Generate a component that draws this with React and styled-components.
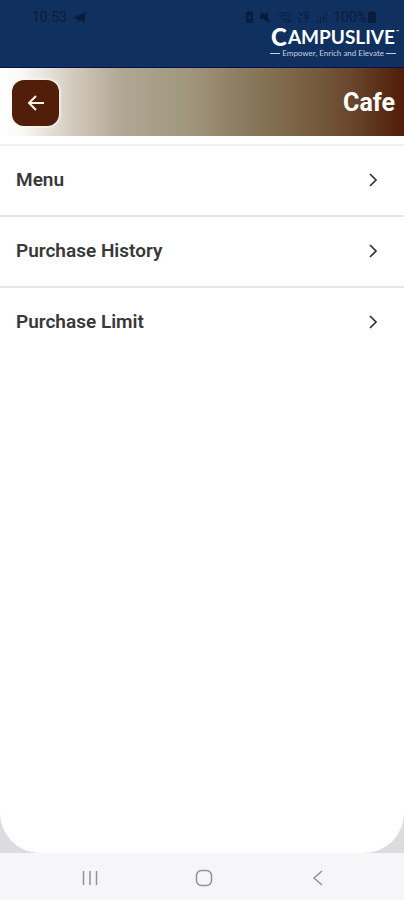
import React from "react";
import styled, { createGlobalStyle } from "styled-components";

const GlobalStyle = createGlobalStyle`
  * {
    box-sizing: border-box;
  }
  body {
    margin: 0;
    background: #fff;
    font-family: Roboto, "Liberation Sans", sans-serif;
  }
`;

const Screen = styled.div`
  display: flex;
  flex-direction: column;
  min-height: 100vh;
  background: #dddbe0;
`;

const Header = styled.header`
  height: 68px;
  padding-top: 8px;
  background: #103060;
  border-bottom: 1px solid #06104a;
`;

const StatusBar = styled.div`
  display: flex;
  justify-content: space-between;
  height: 18px;
  padding: 0 28px 0 32px;
  color: #0a1c3c;
  font-size: 14px;
  line-height: 18px;
`;

const StatusGroup = styled.div`
  display: flex;
  align-items: center;
  gap: ${props => props.$gap};
`;

const Brand = styled.div`
  display: flex;
  flex-direction: column;
  align-items: flex-end;
  padding-right: 8px;
  color: #fff;
  font-family: Lato, sans-serif;
`;

const BrandName = styled.div`
  display: flex;
  align-items: center;
  gap: 1px;
  height: 22px;
  font-size: 19px;
  font-weight: 700;
  line-height: 22px;
`;

const BrandInitial = styled.span`
  font-size: 24px;
  font-weight: 900;
`;

const TradeMark = styled.sup`
  width: 0;
  font-size: 4px;
  line-height: 4px;
  align-self: flex-start;
  margin-top: 4px;
`;

const Tagline = styled.div`
  display: flex;
  align-items: center;
  gap: 2px;
  height: 10px;
  color: #c4cfe0;
  font-size: 8px;
  line-height: 10px;

  &::before,
  &::after {
    content: "";
    width: 10px;
    height: 1px;
    background: #c4cfe0;
  }
`;

const TitleBar = styled.div`
  display: flex;
  align-items: center;
  justify-content: space-between;
  height: 68px;
  padding: 2px 9px 0 12px;
  background: linear-gradient(
    90deg,
    #fff 0%,
    #fbfaf8 5%,
    #d2cabd 18%,
    #b1a794 30%,
    #9f947b 48%,
    #8b7c5f 60%,
    #765b3d 78%,
    #67432a 88%,
    #501c08 100%
  );
`;

const BackButton = styled.button`
  display: flex;
  align-items: center;
  justify-content: center;
  width: 47px;
  height: 46px;
  padding: 0;
  border: 0;
  border-radius: 12px;
  background: #501e09;
  box-shadow: 0 0 2px 2px rgba(255, 250, 240, 0.6);
  cursor: pointer;
`;

const Title = styled.h1`
  margin: 0;
  color: #fff;
  font-size: 25px;
  font-weight: 700;
  line-height: 32px;
`;

const Content = styled.main`
  flex: 1;
  padding-top: 8px;
  background: #fff;
  border-radius: 0 0 40px 40px;
`;

const MenuList = styled.ul`
  margin: 0;
  padding: 0;
  list-style: none;
`;

const MenuItem = styled.li`
  border-top: 2px solid #e6e6e6;

  &:first-child {
    border-color: #f0f0f0;
  }
`;

const MenuLink = styled.a`
  display: flex;
  align-items: center;
  justify-content: space-between;
  height: 69px;
  padding: 0 24px 2px 16px;
  color: #383838;
  font-size: 19px;
  font-weight: 600;
  text-decoration: none;
`;

const NavBar = styled.nav`
  display: flex;
  align-items: center;
  justify-content: center;
  gap: 66px;
  height: 47px;
  padding: 3px 0 0 4px;
  background: #f6f6f9;
`;

const NavButton = styled.button`
  display: flex;
  align-items: center;
  justify-content: center;
  width: 48px;
  height: 40px;
  padding: 0;
  border: 0;
  background: none;
  color: #929296;
`;

const items = ["Menu", "Purchase History", "Purchase Limit"];

const TelegramIcon = () => (
  <svg width="13" height="13" viewBox="0 0 13 13" fill="currentColor">
    <path d="M0 7 13 1 11 12 7 9 5 12 4 8Z" />
  </svg>
);

const SaverIcon = () => (
  <svg width="9" height="12" viewBox="0 0 9 12">
    <path d="M3 0h3v1h2v11H1V1h2Z" fill="currentColor" />
    <path d="M4.500 4v5M2.500 6.500h4" stroke="#103060" />
  </svg>
);

const MuteIcon = () => (
  <svg width="11" height="12" viewBox="0 0 11 12">
    <path d="M0 4h3l5-3v10L3 8H0Z" fill="currentColor" />
    <path d="m1 1 9 10" stroke="currentColor" strokeWidth="1.500" />
  </svg>
);

const WifiIcon = () => (
  <svg width="15" height="12" viewBox="0 0 15 12" fill="none" stroke="currentColor">
    <path d="M1 4q6.500-5 13 0M3 6q4.500-3.500 9 0M5 8.500q2.500-2 5 0M7.500 10v1M11 8v4m2-4v4" />
  </svg>
);

const VolteIcon = () => (
  <svg width="12" height="12" viewBox="0 0 12 12" fill="none" stroke="currentColor">
    <path d="m1 1 2 4 2-4M7 1h3v4H7ZM1 7v4h3M6 7h5M8.500 7v4" />
  </svg>
);

const SignalIcon = () => (
  <svg width="11" height="12" viewBox="0 0 11 12" fill="none" stroke="currentColor">
    <path d="M1.500 9v3M4.500 6.500V12M7.500 4v8M10 1v11" />
  </svg>
);

const BatteryIcon = () => (
  <svg width="8" height="12" viewBox="0 0 8 12" fill="currentColor">
    <path d="M2.500 0h3v1H7q1 0 1 1v9q0 1-1 1H1q-1 0-1-1V2q0-1 1-1h1.500Z" />
  </svg>
);

const ArrowIcon = () => (
  <svg width="18" height="18" viewBox="0 0 18 18" fill="none" stroke="#fff4e8" strokeWidth="2">
    <path d="M17 9H3M9 2 2 9l7 7" />
  </svg>
);

const ChevronIcon = () => (
  <svg width="12" height="16" viewBox="0 0 12 16" fill="none" stroke="#333" strokeWidth="1.700">
    <path d="m2 2 6 6-6 6" />
  </svg>
);

const RecentsIcon = () => (
  <svg width="18" height="16" viewBox="0 0 18 16" fill="none" stroke="currentColor" strokeWidth="1.500">
    <path d="M2.500 1v14M9 1v14M15.500 1v14" />
  </svg>
);

const HomeIcon = () => (
  <svg width="18" height="18" viewBox="0 0 18 18" fill="none" stroke="currentColor" strokeWidth="1.500">
    <rect x="1.500" y="1.500" width="15" height="15" rx="5" />
  </svg>
);

const NavBackIcon = () => (
  <svg width="12" height="18" viewBox="0 0 12 18" fill="none" stroke="currentColor" strokeWidth="1.500">
    <path d="M10 2 2 9l8 7" />
  </svg>
);

export default function App() {
  return (
    <Screen>
      <GlobalStyle />
      <Header>
        <StatusBar>
          <StatusGroup $gap="6px">
            <span>10:53</span>
            <TelegramIcon />
          </StatusGroup>
          <StatusGroup $gap="6px">
            <SaverIcon />
            <MuteIcon />
            <WifiIcon />
            <VolteIcon />
            <SignalIcon />
            <StatusGroup $gap="1px">
              <span>100%</span>
              <BatteryIcon />
            </StatusGroup>
          </StatusGroup>
        </StatusBar>
        <Brand>
          <BrandName>
            <BrandInitial>C</BrandInitial>
            <span>AMPUSLIVE</span>
            <TradeMark>™</TradeMark>
          </BrandName>
          <Tagline>Empower, Enrich and Elevate</Tagline>
        </Brand>
      </Header>
      <TitleBar>
        <BackButton type="button" aria-label="Back">
          <ArrowIcon />
        </BackButton>
        <Title>Cafe</Title>
      </TitleBar>
      <Content>
        <MenuList>
          {items.map(item => (
            <MenuItem key={item}>
              <MenuLink href="#">
                {item}
                <ChevronIcon />
              </MenuLink>
            </MenuItem>
          ))}
        </MenuList>
      </Content>
      <NavBar>
        <NavButton type="button" aria-label="Recents">
          <RecentsIcon />
        </NavButton>
        <NavButton type="button" aria-label="Home">
          <HomeIcon />
        </NavButton>
        <NavButton type="button" aria-label="Go back">
          <NavBackIcon />
        </NavButton>
      </NavBar>
    </Screen>
  );
}
